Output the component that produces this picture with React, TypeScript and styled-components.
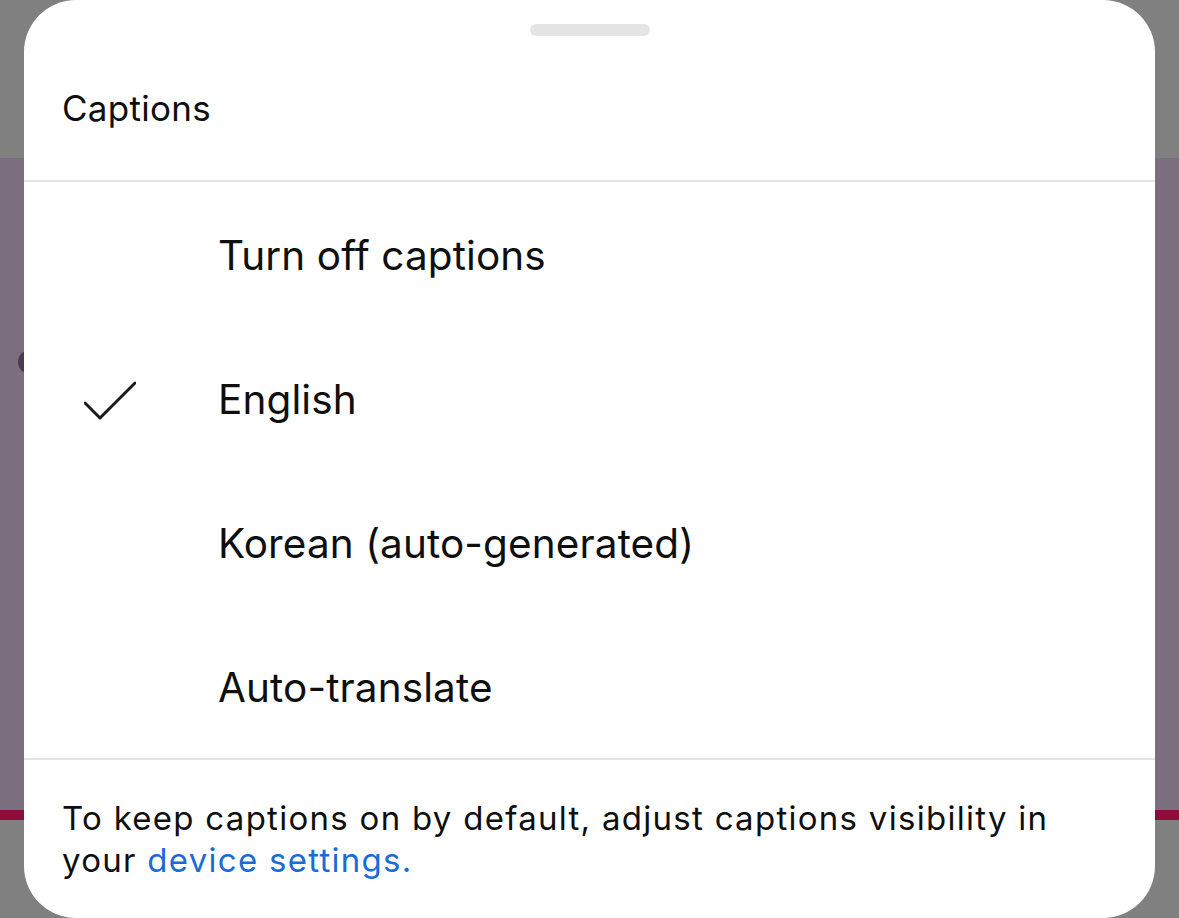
import React from "react";
import styled, { createGlobalStyle } from "styled-components";

const Global = createGlobalStyle`
  html, body { margin: 0; padding: 0; }
  body {
    width: 1179px;
    height: 918px;
    overflow: hidden;
    font-family: Inter, "Noto Sans", "Liberation Sans", sans-serif;
    -webkit-font-smoothing: antialiased;
  }
`;

const Backdrop = styled.div`
  position: relative;
  width: 1179px;
  height: 918px;
  display: flex;
  flex-direction: column;
  background: #808080;
`;

const Band = styled.div<{ $h: number; $c: string }>`
  height: ${(p) => p.$h}px;
  flex: 0 0 auto;
  background: ${(p) => p.$c};
`;

const Dot = styled.div`
  position: absolute;
  left: 18px;
  top: 350px;
  width: 24px;
  height: 24px;
  border-radius: 50%;
  background: #4a3a52;
`;

const Sheet = styled.div`
  position: absolute;
  left: 24px;
  top: 0;
  width: 1131px;
  height: 918px;
  background: #ffffff;
  border-radius: 52px;
  display: flex;
  flex-direction: column;
  color: #0f0f0f;
`;

const Header = styled.div`
  height: 180px;
  display: flex;
  flex-direction: column;
  align-items: stretch;
  border-bottom: 2px solid #e4e4e4;
`;

const HandleWrap = styled.div`
  display: flex;
  justify-content: center;
  padding-top: 24px;
`;

const Handle = styled.div`
  width: 120px;
  height: 12px;
  border-radius: 6px;
  background: #e5e5e5;
`;

const Title = styled.div`
  margin-top: 52px;
  padding-left: 38px;
  font-size: 35px;
  line-height: 40px;
  letter-spacing: 0.3px;
`;

const List = styled.div`
  display: flex;
  flex-direction: column;
  border-bottom: 2px solid #e4e4e4;
`;

const Row = styled.div`
  height: 144px;
  display: flex;
  align-items: center;
  padding-top: 3px;
  box-sizing: border-box;
`;

const CheckCell = styled.div`
  width: 194px;
  display: flex;
  align-items: center;
  padding-left: 60px;
  box-sizing: border-box;
`;

const Label = styled.div`
  font-size: 40.5px;
  line-height: 48px;
  letter-spacing: 0.1px;
`;

const Footer = styled.div`
  padding: 37px 90px 0 38px;
  font-size: 33px;
  line-height: 42px;
  letter-spacing: 1.28px;
`;

const Link = styled.span`
  color: #1b6bd4;
`;

const Check = () => (
  <svg width="52" height="40" viewBox="0 0 52 40" fill="none">
    <path d="M1 23 L16 38 L51 3" stroke="#1a1a1a" strokeWidth="3" strokeLinecap="round" strokeLinejoin="round" />
  </svg>
);

const items = [
  { label: "Turn off captions", checked: false },
  { label: "English", checked: true },
  { label: "Korean (auto-generated)", checked: false },
  { label: "Auto-translate", checked: false },
];

export default function App() {
  return (
    <>
      <Global />
      <Backdrop>
        <Band $h={158} $c="#808080" />
        <Band $h={652} $c="#7b6e7e" />
        <Band $h={10} $c="#8c0c3a" />
        <Band $h={98} $c="#808080" />
        <Dot />
        <Sheet>
          <Header>
            <HandleWrap>
              <Handle />
            </HandleWrap>
            <Title>Captions</Title>
          </Header>
          <List>
            {items.map((it) => (
              <Row key={it.label}>
                <CheckCell>{it.checked && <Check />}</CheckCell>
                <Label>{it.label}</Label>
              </Row>
            ))}
          </List>
          <Footer>
            To keep captions on by default, adjust captions visibility in your <Link>device settings.</Link>
          </Footer>
        </Sheet>
      </Backdrop>
    </>
  );
}
